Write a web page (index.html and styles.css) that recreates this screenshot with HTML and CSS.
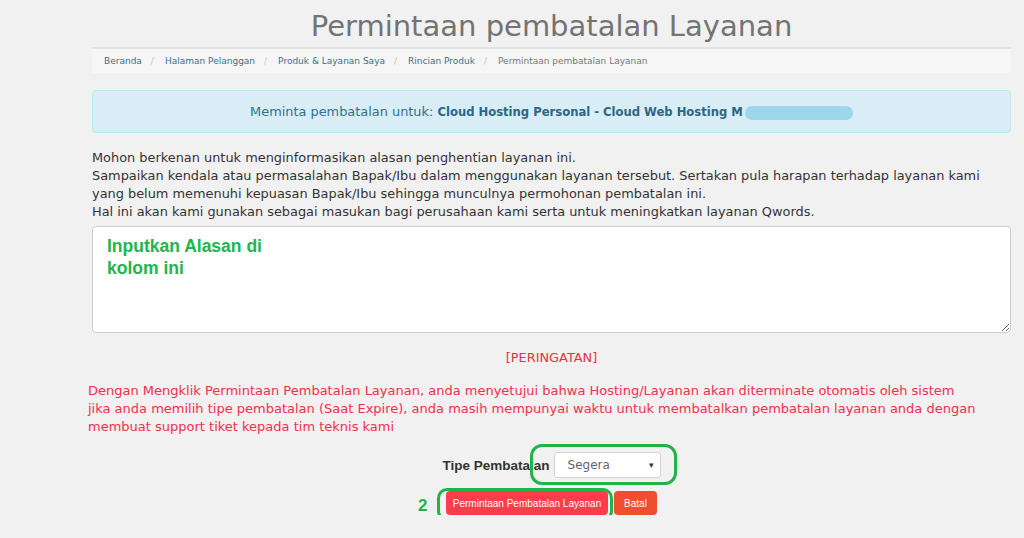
FILE: index.html
```html
<!DOCTYPE html>
<html lang="id">
<head>
    <meta charset="UTF-8">
    <meta name="viewport" content="width=device-width, initial-scale=1.0">
    <title>Permintaan pembatalan Layanan</title>
    <link rel="stylesheet" href="styles.css">
</head>
<body>

<div class="main-content">
    <!-- Page Header -->
    <h1 class="page-title">Permintaan pembatalan Layanan</h1>

    <!-- Breadcrumb -->
    <ol class="breadcrumb">
        <li><a href="#">Beranda</a></li>
        <li><a href="#">Halaman Pelanggan</a></li>
        <li><a href="#">Produk &amp; Layanan Saya</a></li>
        <li><a href="#">Rincian Produk</a></li>
        <li class="active">Permintaan pembatalan Layanan</li>
    </ol>

    <!-- Info Alert -->
    <div class="alert-info">
        Meminta pembatalan untuk: <strong>Cloud Hosting Personal - Cloud Web Hosting M</strong><span class="blurred"></span>
    </div>

    <p class="intro">
        Mohon berkenan untuk menginformasikan alasan penghentian layanan ini.<br>
        Sampaikan kendala atau permasalahan Bapak/Ibu dalam menggunakan layanan tersebut. Sertakan pula harapan terhadap layanan kami yang belum memenuhi kepuasan Bapak/Ibu sehingga munculnya permohonan pembatalan ini.<br>
        Hal ini akan kami gunakan sebagai masukan bagi perusahaan kami serta untuk meningkatkan layanan Qwords.
    </p>

    <!-- Reason -->
    <textarea class="reason" name="reason">Inputkan Alasan di
kolom ini</textarea>

    <p class="warning-title">[PERINGATAN]</p>

    <p class="warning-text">
        Dengan Mengklik Permintaan Pembatalan Layanan, anda menyetujui bahwa Hosting/Layanan akan diterminate otomatis oleh sistem jika anda memilih tipe pembatalan (Saat Expire), anda masih mempunyai waktu untuk membatalkan pembatalan layanan anda dengan membuat support tiket kepada tim teknis kami
    </p>

    <!-- Cancellation Type -->
    <div class="type-row">
        <label class="type-label">Tipe Pembatalan</label>
        <div class="select-wrap">
            <div class="select-box">
                <span>Segera</span>
                <span class="caret">&#9662;</span>
            </div>
            <span class="marker marker-select"></span>
        </div>
    </div>

    <!-- Buttons -->
    <div class="button-row">
        <div class="submit-wrap">
            <span class="step-number">2</span>
            <button class="btn-cancel-request">Permintaan Pembatalan Layanan</button>
            <span class="marker marker-button"></span>
        </div>
        <button class="btn-back">Batal</button>
    </div>
</div>

</body>
</html>
```

FILE: styles.css
```css
body {
    margin: 0;
    padding: 0;
    background-color: #f1f1f1;
    font-family: "DejaVu Sans", Verdana, sans-serif;
    color: #333;
}
.main-content {
    width: 919px;
    margin-left: 92px;
}
.page-title {
    margin: 0;
    padding-top: 9px;
    height: 38px;
    font-size: 29px;
    font-weight: normal;
    line-height: 34px;
    text-align: center;
    color: #737373;
    border-bottom: 2px solid #e2e2e2;
}
.breadcrumb {
    list-style: none;
    margin: 0;
    padding: 0 12px;
    height: 24px;
    display: flex;
    align-items: center;
    background-color: #f6f6f6;
    font-size: 9px;
}
.breadcrumb li {
    color: #777;
}
.breadcrumb li a {
    color: #3d6d8c;
    text-decoration: none;
}
.breadcrumb li + li:before {
    content: "/";
    color: #c4c4c4;
    padding: 0 11px 0 9px;
}
.alert-info {
    margin-top: 17px;
    height: 41px;
    line-height: 41px;
    text-align: center;
    background-color: #d9edf7;
    border: 1px solid #bce8f1;
    border-radius: 4px;
    color: #31708f;
    font-size: 12.9px;
}
.alert-info strong {
    font-family: "DejaVu Sans Condensed", "DejaVu Sans", sans-serif;
    font-stretch: condensed;
    color: #2b6684;
}
.blurred {
    display: inline-block;
    width: 108px;
    height: 14px;
    margin-left: 2px;
    border-radius: 7px;
    background-color: #9cd8ea;
    vertical-align: middle;
}
.intro {
    margin: 16px 0 0 0;
    font-size: 12.9px;
    line-height: 18px;
}
.reason {
    display: block;
    box-sizing: border-box;
    width: 919px;
    height: 107px;
    margin-top: 5px;
    padding: 8px 14px;
    background-color: #fff;
    border: 1px solid #ccc;
    border-radius: 4px;
    font-family: "Liberation Sans", Arial, sans-serif;
    font-size: 17.5px;
    font-weight: bold;
    line-height: 22px;
    color: #23b44e;
}
.warning-title {
    margin: 16px 0 0 0;
    text-align: center;
    font-size: 12.9px;
    line-height: 18px;
    color: #e8333b;
}
.warning-text {
    margin: 15px 32px 0 -4px;
    font-size: 13px;
    line-height: 18px;
    color: #f3304b;
}
.type-row {
    margin-top: 16px;
    display: flex;
    justify-content: center;
    align-items: center;
    gap: 4px;
}
.type-label {
    font-family: "Liberation Sans", Arial, sans-serif;
    font-size: 13.5px;
    font-weight: bold;
    color: #333;
}
.select-wrap {
    position: relative;
}
.select-box {
    box-sizing: border-box;
    width: 107px;
    height: 26px;
    padding: 0 6px 0 13px;
    display: flex;
    justify-content: space-between;
    align-items: center;
    background-color: #fff;
    border: 1px solid #d4d4d4;
    border-radius: 3px;
    font-size: 12px;
    color: #666;
}
.caret {
    font-size: 9px;
    color: #333;
}
.marker {
    position: absolute;
    z-index: 1;
    border: 3px solid #22b34a;
    border-radius: 12px;
    pointer-events: none;
}
.marker-select {
    left: -24px;
    top: -8px;
    right: -16px;
    bottom: -7px;
}
.button-row {
    margin-top: 13px;
    display: flex;
    justify-content: center;
    gap: 6px;
}
.submit-wrap {
    position: relative;
    display: flex;
}
.marker-button {
    left: -9px;
    top: -3px;
    right: -5px;
    bottom: -6px;
    border-radius: 10px;
}
.step-number {
    position: absolute;
    left: -28px;
    top: 5px;
    font-family: "Liberation Sans", Arial, sans-serif;
    font-size: 17px;
    font-weight: bold;
    color: #22b34a;
}
.btn-cancel-request, .btn-back {
    height: 24px;
    padding: 0;
    border: none;
    border-radius: 4px;
    color: #fff;
    font-family: "Liberation Sans", Arial, sans-serif;
    font-size: 10px;
    white-space: nowrap;
    cursor: pointer;
}
.btn-cancel-request {
    width: 162px;
    background-color: #fe3d4a;
}
.btn-back {
    width: 43px;
    background-color: #ef4f2e;
}
```
